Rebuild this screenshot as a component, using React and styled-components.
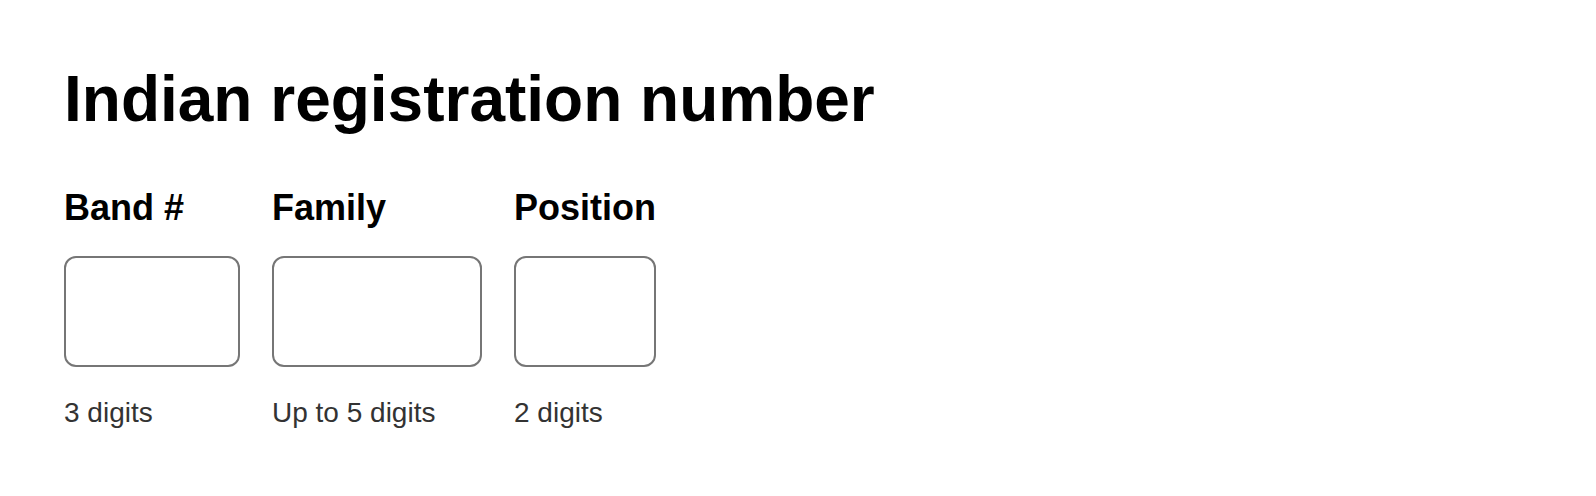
import React from 'react'
import styled, { createGlobalStyle } from 'styled-components';

const GlobalStyle = createGlobalStyle`
  html, body {
    margin: 0;
    padding: 0;
    background: #ffffff;
  }
  body {
    font-family: "Liberation Sans", Arial, sans-serif;
    color: #000;
  }
`

const fields = [
    { label: 'Band #', hint: '3 digits', width: 176 },
    { label: 'Family', hint: 'Up to 5 digits', width: 210 },
    { label: 'Position', hint: '2 digits', width: 142 },
];

const App = () => {
  return (
    <Page>
        <GlobalStyle />
        <Title>Indian registration number</Title>
        <FieldRow>
            {
                fields.map((f, i) => (
                    <Field key={i}>
                        <Label htmlFor={`reg-${i}`}>{f.label}</Label>
                        <Input id={`reg-${i}`} type="text" $width={f.width} />
                        <Hint>{f.hint}</Hint>
                    </Field>
                ))
            }
        </FieldRow>
    </Page>
  )
}

export default App;

const Page = styled.div`
  padding: 62px 64px 40px;
`

const Title = styled.h1`
  margin: 0;
  font-size: 64px;
  line-height: 74px;
  font-weight: 700;
`

const FieldRow = styled.div`
  display: flex;
  gap: 32px;
  margin-top: 51px;
`

const Field = styled.div`
  display: flex;
  flex-direction: column;
`

const Label = styled.label`
  font-size: 36px;
  line-height: 41px;
  font-weight: 700;
`

const Input = styled.input`
  box-sizing: border-box;
  margin-top: 28px;
  width: ${(props) => props.$width}px;
  height: 111px;
  border: 2px solid #767676;
  border-radius: 12px;
  background: #fff;
  font-family: inherit;
  font-size: 36px;
  padding: 0 16px;
  outline: none;
`

const Hint = styled.p`
  margin: 30px 0 0 0;
  font-size: 28px;
  line-height: 32px;
  color: #333;
`
